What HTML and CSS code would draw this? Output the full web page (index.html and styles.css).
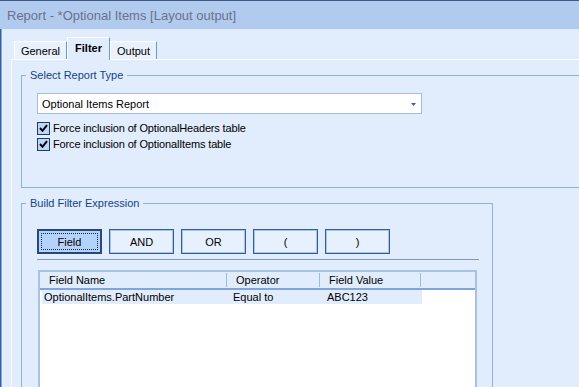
FILE: index.html
```html
<!DOCTYPE html>
<html>
<head>
<meta charset="utf-8">
<title>Report</title>
<link rel="stylesheet" href="styles.css">
</head>
<body>
<div class="window">
  <div class="titlebar">Report - *Optional Items [Layout output]</div>
  <div class="client">
    <div class="tabs">
      <div class="tab tab-general">General</div>
      <div class="tab tab-filter active">Filter</div>
      <div class="tab tab-output">Output</div>
    </div>
    <div class="page">
      <fieldset class="group group1">
        <legend>Select Report Type</legend>
        <div class="g1body">
          <div class="combo">
            <span class="combo-text">Optional Items Report</span>
            <svg class="combo-arrow" width="5" height="3" viewBox="0 0 5 3"><polygon points="0,0 5,0 2.5,3" fill="#3d5f9c"/></svg>
          </div>
          <div class="check"><span class="box"><svg width="11" height="11" viewBox="0 0 11 11"><polyline points="2,5 4.5,7.8 9,2.2" fill="none" stroke="#000" stroke-width="2"/></svg></span><span>Force inclusion of OptionalHeaders table</span></div>
          <div class="check"><span class="box"><svg width="11" height="11" viewBox="0 0 11 11"><polyline points="2,5 4.5,7.8 9,2.2" fill="none" stroke="#000" stroke-width="2"/></svg></span><span>Force inclusion of OptionalItems table</span></div>
        </div>
      </fieldset>
      <fieldset class="group group2">
        <legend>Build Filter Expression</legend>
        <div class="g2body">
          <div class="buttons">
            <div class="btn btn-focus"><span class="focus">Field</span></div>
            <div class="btn">AND</div>
            <div class="btn">OR</div>
            <div class="btn">(</div>
            <div class="btn">)</div>
          </div>
          <div class="sep"></div>
          <div class="listview">
            <div class="lv-header">
              <div class="hcell">Field Name</div>
              <div class="hcell">Operator</div>
              <div class="hcell">Field Value</div>
            </div>
            <div class="lv-row">
              <div class="rcell c1">OptionalItems.PartNumber</div>
              <div class="rcell c2">Equal to</div>
              <div class="rcell c3">ABC123</div>
            </div>
          </div>
        </div>
      </fieldset>
    </div>
  </div>
</div>
</body>
</html>
```

FILE: styles.css
```css
html, body {
  margin: 0;
  padding: 0;
  width: 579px;
  height: 387px;
  overflow: hidden;
}
body {
  font-family: "Liberation Sans", Arial, sans-serif;
  font-size: 11px;
  color: #000;
  background: #e1ecfc;
}
.window {
  width: 660px;
  height: 387px;
  display: flex;
  flex-direction: column;
}
.titlebar {
  flex: none;
  height: 21px;
  padding: 7px 0 0 7px;
  border-top: 1px solid #3b5a86;
  background: #b1cbef;
  color: #6c7189;
  font-size: 13px;
  line-height: 16px;
  white-space: nowrap;
}
.client {
  flex: 1 1 auto;
  min-height: 0;
  display: flex;
  flex-direction: column;
  border-left: 1px solid #3b5f96;
  box-shadow: inset 1px 0 0 #86a7d6;
  padding-left: 10px;
  background: #e1ecfc;
}
.tabs {
  flex: none;
  height: 30px;
  display: flex;
  align-items: flex-end;
  padding-left: 3px;
  position: relative;
  z-index: 1;
}
.tab {
  box-sizing: border-box;
  height: 18px;
  padding-top: 3px;
  line-height: 13px;
  text-align: center;
  border-top: 1px solid #ffffff;
  border-left: 1px solid #ffffff;
  border-right: 1px solid #6f97cd;
  background: #e9f1fd;
  white-space: nowrap;
}
.tab-general { width: 53px; }
.tab-filter { width: 43px; }
.tab-output { width: 47px; }
.tab.active {
  height: 23px;
  margin-bottom: -1px;
  padding-top: 4px;
  font-weight: bold;
  background: #e1ecfc;
}
.page {
  flex: none;
  border-top: 1px solid #ffffff;
  border-left: 1px solid #fbfcf2;
  padding-left: 9px;
  background: #e1ecfc;
}
.group {
  margin: 0;
  padding: 0;
  border: 1px solid #8fb1e1;
  min-width: 0;
}
.group legend {
  margin-left: 4px;
  padding: 0 4px;
  color: #15428b;
  line-height: 13px;
}
.group1 {
  margin-top: 9px;
  width: 600px;
}
.g1body {
  box-sizing: border-box;
  height: 105px;
  padding: 11px 0 0 15px;
}
.combo {
  box-sizing: border-box;
  width: 385px;
  height: 21px;
  display: flex;
  align-items: center;
  justify-content: space-between;
  padding: 0 5px 0 4px;
  border: 1px solid #a3bcdf;
  background: #ffffff;
}
.combo-arrow {
  display: block;
  margin-top: 1px;
}
.check {
  display: flex;
  align-items: center;
  height: 16px;
  white-space: nowrap;
  letter-spacing: -0.15px;
}
.g1body .combo + .check {
  margin-top: 6px;
}
.box {
  box-sizing: border-box;
  width: 13px;
  height: 13px;
  margin-right: 3px;
  border: 1px solid #1c3b66;
  background: #bdd6f6;
  display: flex;
  align-items: center;
  justify-content: center;
}
.box svg {
  display: block;
}
.group2 {
  margin-top: 9px;
  width: 472px;
  box-sizing: border-box;
}
.g2body {
  padding: 19px 0 0 15px;
  height: 200px;
}
.buttons {
  display: flex;
  gap: 7px;
}
.btn {
  box-sizing: border-box;
  width: 65px;
  height: 25px;
  display: flex;
  align-items: center;
  justify-content: center;
  border: 1px solid #2f5e98;
  box-shadow: inset 0 0 0 1px #a9c4e8;
  background: #e7f0fd;
}
.btn-focus {
  border: 2px solid #24497c;
  box-shadow: none;
  background: #b4d3fc;
  padding: 2px;
}
.focus {
  box-sizing: border-box;
  width: 100%;
  height: 100%;
  display: flex;
  align-items: center;
  justify-content: center;
  border: 1px dotted #222;
}
.sep {
  width: 442px;
  height: 1px;
  margin-top: 5px;
  background: #8198b8;
}
.listview {
  box-sizing: border-box;
  width: 439px;
  height: 140px;
  margin: 10px 0 0 1px;
  border: 2px solid #a8c2e6;
  background: #ffffff;
}
.lv-header {
  display: grid;
  grid-template-columns: 187px 93px 101px 1fr;
  height: 16px;
  align-items: center;
  border-bottom: 2px solid #7ea6dc;
  background: #e1ecfc;
}
.hcell {
  box-sizing: border-box;
  height: 14px;
  padding-left: 9px;
  line-height: 14px;
  border-right: 1px solid #9bbbe6;
  white-space: nowrap;
}
.lv-row {
  display: grid;
  grid-template-columns: 185px 94px 101px;
  width: 380px;
  height: 14px;
  margin-left: 2px;
  line-height: 14px;
  background: #e1ecfc;
}
.rcell {
  white-space: nowrap;
}
.c1 { padding-left: 2px; }
.c2 { padding-left: 6px; }
.c3 { padding-left: 6px; }
```
